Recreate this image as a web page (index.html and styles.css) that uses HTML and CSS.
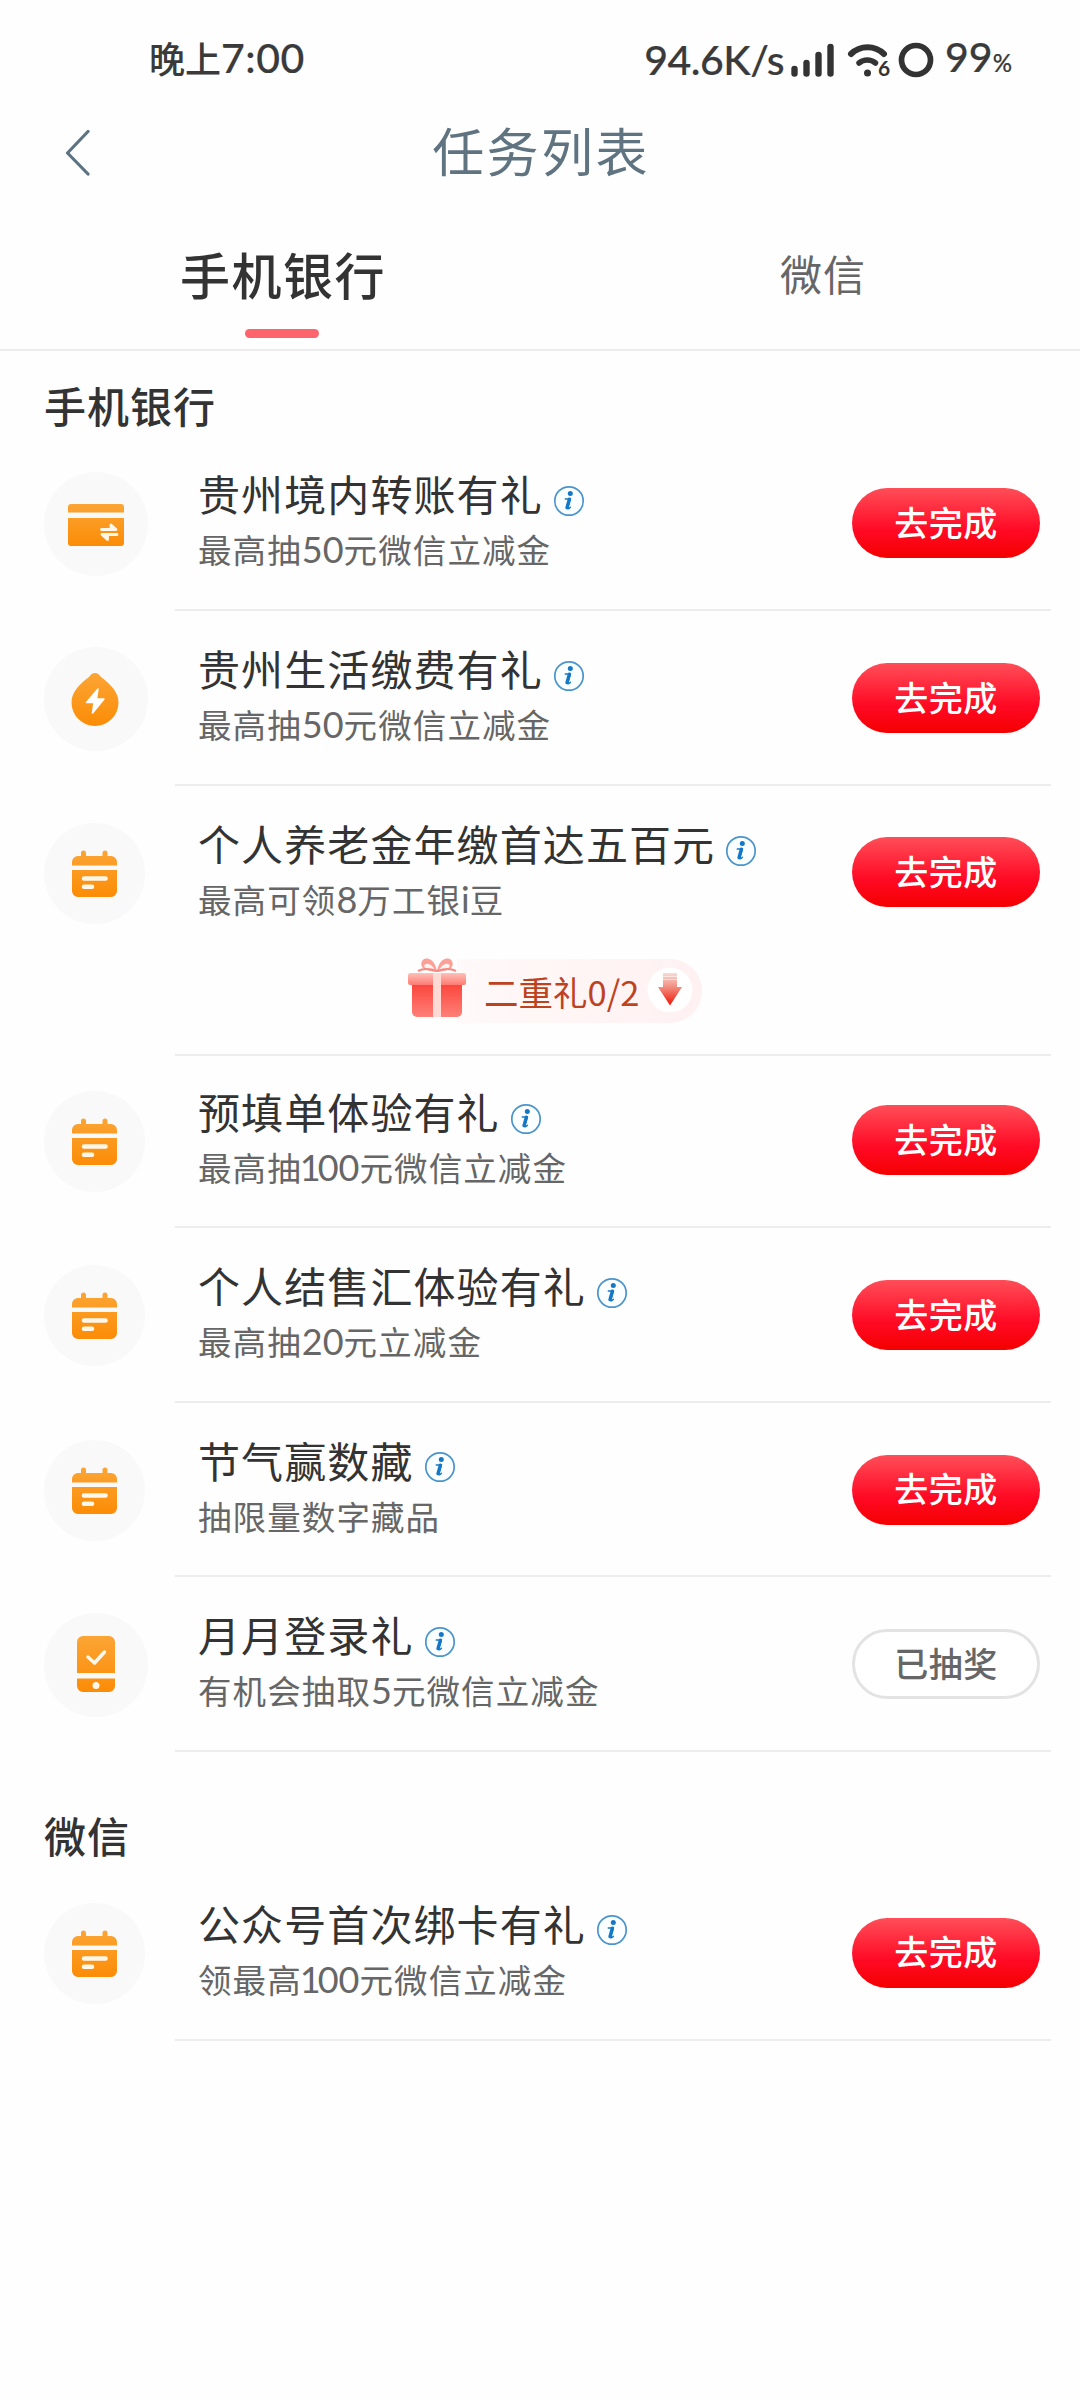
FILE: index.html
```html
<!DOCTYPE html>
<html lang="zh-CN">
<head>
<meta charset="utf-8">
<title>任务列表</title>
<link rel="stylesheet" href="styles.css">
</head>
<body>
<svg class="defs" width="0" height="0" aria-hidden="true">
  <defs>
    <linearGradient id="orange" x1="0" y1="0" x2="0" y2="1"><stop offset="0" stop-color="#fba535"/><stop offset="1" stop-color="#fb8c06"/></linearGradient>
    <linearGradient id="box" x1="0" y1="0" x2="0" y2="1"><stop offset="0" stop-color="#fb4238"/><stop offset="1" stop-color="#fd8078"/></linearGradient>
    <linearGradient id="lid" x1="0" y1="0" x2="0" y2="1"><stop offset="0" stop-color="#ffc0b8"/><stop offset="1" stop-color="#fd7a72"/></linearGradient>
    <linearGradient id="arrow" x1="0" y1="0" x2="0" y2="1"><stop offset="0" stop-color="#f8dcd8"/><stop offset=".45" stop-color="#f28a7c"/><stop offset="1" stop-color="#f01404"/></linearGradient>
    <symbol id="i-card" viewBox="0 0 104 104">
      <path d="M27 32h50a3 3 0 0 1 3 3v5.500H24V35a3 3 0 0 1 3-3zM24 46h56v25a3 3 0 0 1-3 3H27a3 3 0 0 1-3-3z" fill="url(#orange)"/>
      <path d="M57.500 57.500H72L67 53v4M73 62.500H58l5.500 5v-4" fill="none" stroke="#fff8ea" stroke-width="2.800" stroke-linejoin="round" stroke-linecap="round"/>
    </symbol>
    <symbol id="i-drop" viewBox="0 0 104 104">
      <path d="M51 26c2.500 0 4 1.500 6 4 10 7.500 17.500 15.500 17.500 25.500a23.500 23.500 0 0 1-47 0C27.500 45.500 35 37.500 45 30c2-2.500 3.500-4 6-4z" fill="url(#orange)"/>
      <path d="M54 42 42.500 55.500H50L48.500 66 60 52h-7.500z" fill="#fff" stroke="#fff" stroke-width="1.500" stroke-linejoin="round"/>
    </symbol>
    <symbol id="i-cal" viewBox="0 0 101 101">
      <path d="M37 30a2.500 2.500 0 0 1 5 0v3h16.500v-3a2.500 2.500 0 0 1 5 0v3H67a6 6 0 0 1 6 6v3.500H28V39a6 6 0 0 1 6-6h3zM28 47h45v21a6 6 0 0 1-6 6H34a6 6 0 0 1-6-6z" fill="url(#orange)"/>
      <path d="M40 55.500h21.500M40 63.700h8" stroke="#fff8ea" stroke-width="4.600" stroke-linecap="round"/>
    </symbol>
    <symbol id="i-phone" viewBox="0 0 104 104">
      <path d="M39 23h26a6 6 0 0 1 6 6v31H33V29a6 6 0 0 1 6-6zM33 65.500h38V73a6 6 0 0 1-6 6H39a6 6 0 0 1-6-6z" fill="url(#orange)"/>
      <path d="m44 44 6.500 6 10-11" fill="none" stroke="#fff8ea" stroke-width="3.500" stroke-linecap="round" stroke-linejoin="round"/>
      <circle cx="52" cy="72.500" r="3.500" fill="#fff8ea"/>
    </symbol>
    <symbol id="i-info" viewBox="0 0 32 32">
      <circle cx="16" cy="16" r="14.200" fill="#fbfeff" stroke="#4a94cc" stroke-width="1.700"/>
      <circle cx="17.300" cy="8.600" r="2.500" fill="#1478c8"/>
      <path d="M12.300 14h5l-2.500 9c-.2 1 .7 1.200 2.600-.7" fill="none" stroke="#1478c8" stroke-width="1.500" stroke-linecap="round"/>
      <path d="M16.400 14.200 14 22.600" stroke="#1478c8" stroke-width="3.400" stroke-linecap="round"/>
    </symbol>
  </defs>
</svg>

<header class="status">
  <div class="clock"><span class="cn">晚上</span>7:00</div>
  <div class="indicators">
    <span class="speed">94.6K/s</span>
    <svg class="signal" width="44" height="34" viewBox="0 0 44 34"><path d="M3.500 26v4.500M15.500 20v10.500M27.500 12v18.500M39.500 4v26.500" stroke="#333" stroke-width="6.400" stroke-linecap="round"/></svg>
    <svg class="wifi" width="46" height="48" viewBox="0 -6 46 48"><path d="M4 12a23.500 23.500 0 0 1 33 0" fill="none" stroke="#333" stroke-width="6" stroke-linecap="round"/><path d="M12 21a13 13 0 0 1 16.500 0" fill="none" stroke="#333" stroke-width="5.500" stroke-linecap="round"/><circle cx="20.500" cy="31" r="3.500" fill="#333"/><text x="31" y="34" class="wifi-gen">6</text></svg>
    <svg class="ring" width="36" height="36" viewBox="0 0 36 36"><circle cx="18" cy="18" r="14.500" fill="none" stroke="#333" stroke-width="5.700"/></svg>
    <span class="level">99<small>%</small></span>
  </div>
</header>

<nav class="navbar">
  <svg class="back" width="26" height="48" viewBox="0 0 26 48"><path d="M23 3.500 2.500 25 23 46" fill="none" stroke="#5d7382" stroke-width="3.200" stroke-linecap="round" stroke-linejoin="round"/></svg>
  <h1>任务列表</h1>
</nav>

<div class="tabs">
  <div class="tab active">手机银行</div>
  <div class="tab">微信</div>
</div>

<main>
  <section>
    <h2>手机银行</h2>
    <article class="task first">
      <svg class="icon"><use href="#i-card"/></svg>
      <div class="body"><div class="text"><h3>贵州境内转账有礼<svg class="info"><use href="#i-info"/></svg></h3><p>最高抽<b>50</b>元微信立减金</p></div><button>去完成</button></div>
    </article>
    <article class="task first">
      <svg class="icon"><use href="#i-drop"/></svg>
      <div class="body"><div class="text"><h3>贵州生活缴费有礼<svg class="info"><use href="#i-info"/></svg></h3><p>最高抽<b>50</b>元微信立减金</p></div><button>去完成</button></div>
    </article>
    <article class="task bonus">
      <svg class="icon small"><use href="#i-cal"/></svg>
      <div class="body"><div class="text"><h3>个人养老金年缴首达五百元<svg class="info"><use href="#i-info"/></svg></h3><p>最高可领<b>8</b>万工银<b>i</b>豆</p></div><button>去完成</button></div>
      <div class="reward">
        <svg class="gift" width="60" height="62" viewBox="0 0 60 62">
          <path d="M30 15C29 6 24 1 19 1.500S13 8 16 11s8 3 14 4zM30 15C31 6 36 1 41 1.500S47 8 44 11s-8 3-14 4z" fill="#fb9f97"/>
          <path d="M28 13c-3-5-6-7-9-6s-2 4 2 5zM32 13c3-5 6-7 9-6s2 4-2 5z" fill="#fff3f0"/>
          <path d="M11 14c6-3 13-2 19 0 6-2 13-3 19 0" fill="none" stroke="#f98880" stroke-width="2"/>
          <path d="M5 25h50v30a5 5 0 0 1-5 5H10a5 5 0 0 1-5-5z" fill="url(#box)"/>
          <rect x="1" y="16" width="58" height="12" rx="2.500" fill="url(#lid)"/>
          <path d="M26 16h8v44h-8z" fill="#ffd9d3"/>
        </svg>
        <span>二重礼0/2</span>
        <svg class="more" width="46" height="46" viewBox="0 0 46 46"><circle cx="23" cy="23" r="22.500" fill="#fff"/><path d="M16 6h14v3H16zM16 9.500h14v3H16zM16 13h14v7h5L23 38.500 11 20h5z" fill="url(#arrow)"/></svg>
      </div>
    </article>
    <article class="task after-bonus">
      <svg class="icon small"><use href="#i-cal"/></svg>
      <div class="body"><div class="text"><h3>预填单体验有礼<svg class="info"><use href="#i-info"/></svg></h3><p>最高抽<b><i>1</i>00</b>元微信立减金</p></div><button>去完成</button></div>
    </article>
    <article class="task">
      <svg class="icon small"><use href="#i-cal"/></svg>
      <div class="body"><div class="text"><h3>个人结售汇体验有礼<svg class="info"><use href="#i-info"/></svg></h3><p>最高抽<b>20</b>元立减金</p></div><button>去完成</button></div>
    </article>
    <article class="task">
      <svg class="icon small"><use href="#i-cal"/></svg>
      <div class="body"><div class="text"><h3>节气赢数藏<svg class="info"><use href="#i-info"/></svg></h3><p>抽限量数字藏品</p></div><button>去完成</button></div>
    </article>
    <article class="task">
      <svg class="icon"><use href="#i-phone"/></svg>
      <div class="body"><div class="text"><h3>月月登录礼<svg class="info"><use href="#i-info"/></svg></h3><p>有机会抽取<b>5</b>元微信立减金</p></div><button class="done">已抽奖</button></div>
    </article>
  </section>
  <section class="wechat">
    <h2>微信</h2>
    <article class="task first">
      <svg class="icon small"><use href="#i-cal"/></svg>
      <div class="body"><div class="text"><h3>公众号首次绑卡有礼<svg class="info"><use href="#i-info"/></svg></h3><p>领最高<b><i>1</i>00</b>元微信立减金</p></div><button>去完成</button></div>
    </article>
  </section>
</main>
</body>
</html>
```

FILE: styles.css
```css
* { box-sizing: border-box; }
body {
  margin: 0;
  width: 1080px;
  min-height: 2400px;
  background: #fefefe;
  color: #333;
  font-family: "Noto Sans CJK SC", sans-serif;
}
h1, h2, h3, p { margin: 0; font-weight: 400; }
.defs { display: block; height: 0; }

.status {
  height: 120px;
  padding: 0 68px 0 149px;
  display: flex;
  justify-content: space-between;
  align-items: center;
  font: 500 41px/60px Lato, "Noto Sans CJK SC", sans-serif;
  color: #3a3a3a;
  -webkit-text-stroke: .2px #3a3a3a;
}
.clock { letter-spacing: .5px; padding-bottom: 5px; }
.clock .cn { font: 500 36px/60px "Noto Sans CJK SC", sans-serif; letter-spacing: 0; -webkit-text-stroke: 0; }
.indicators { display: flex; align-items: center; }
.indicators span { line-height: 56px; }
.speed { padding-bottom: 1px; letter-spacing: -.5px; }
.signal { margin-left: 7px; }
.wifi { margin-left: 12px; }
.ring { margin-left: 5px; }
.level { margin-left: 11px; }
.level small { font-size: 24px; }
.wifi-gen { font: 700 21px Lato, sans-serif; fill: #333; }

.navbar {
  height: 64px;
  display: flex;
  align-items: center;
  padding: 0 65px;
}
.back { margin-right: -26px; }
.navbar h1 {
  flex: 1;
  margin-top: -5px;
  text-align: center;
  font-size: 52px;
  line-height: 64px;
  letter-spacing: 2.400px;
  text-indent: 2px;
  color: #5f7380;
}

.tabs {
  height: 167px;
  display: grid;
  grid-template-columns: 563px 517px;
  border-bottom: 2px solid #ececec;
}
.tab {
  padding-top: 57px;
  font-size: 42px;
  line-height: 64px;
  letter-spacing: 1px;
  text-indent: 3px;
  text-align: center;
  color: #666;
}
.tab.active { font-size: 50px; font-weight: 500; letter-spacing: 1.500px; color: #333; }
.tab.active::after {
  content: "";
  display: block;
  width: 74px;
  height: 9px;
  margin: 24px auto 0;
  border-radius: 5px;
  background: #fd646b;
}

h2 {
  height: 85px;
  padding: 23px 0 0 44px;
  font-size: 42px;
  font-weight: 500;
  line-height: 62px;
  letter-spacing: 1px;
}
.task {
  height: 174.500px;
  display: grid;
  grid-template-columns: 131px 876px;
  grid-template-rows: 100%;
  margin-left: 44px;
}
.task.first { height: 175px; }
.icon { width: 104px; height: 104px; margin-top: 36px; border-radius: 50%; background: #f9f9f9; }
.icon.small { width: 101px; height: 101px; margin-top: 37px; }
.body {
  display: flex;
  justify-content: space-between;
  padding: 0 11px 0 23px;
  border-bottom: 2px solid #ededed;
}
.text { padding-top: 25px; }
h3 {
  display: flex;
  align-items: center;
  height: 64px;
  font-size: 42px;
  line-height: 62px;
  letter-spacing: 1.100px;
  white-space: nowrap;
}
.info { width: 32px; height: 32px; margin: 15px 0 0 10px; }
p {
  height: 48px;
  font-size: 33.500px;
  line-height: 48px;
  letter-spacing: 1.100px;
  color: #666;
}
p b { font: 400 36px/48px Lato, sans-serif; letter-spacing: 0; }
p i { font-style: normal; letter-spacing: -3px; margin-left: -2px; }
button {
  width: 188px;
  height: 70px;
  margin-top: 52px;
  padding: 0 0 3px;
  border: 0;
  border-radius: 35px;
  background: linear-gradient(#ff4e58, #ff0a25 60%, #f40000);
  color: #fff;
  font: 500 34px/64px "Noto Sans CJK SC", sans-serif;
  letter-spacing: .5px;
}
button.done { background: #fff; border: 3px solid #e3e3e3; color: #666; line-height: 58px; }

.bonus { height: 270px; grid-template-rows: 175px 95px; }
.bonus .body { border-bottom: 0; }
.bonus button { margin-top: 51px; }
.reward {
  grid-column: 2;
  display: flex;
  align-items: flex-start;
  height: 95px;
  padding-left: 232px;
  border-bottom: 2px solid #ededed;
}
.gift { margin-top: -4px; z-index: 1; }
.reward span {
  height: 64px;
  margin: -2px -54px 0 -10px;
  padding: 0 63px 0 27px;
  border-radius: 0 32px 32px 0;
  background: linear-gradient(90deg, #fff9f9, #fff1f1);
  font-size: 34.500px;
  line-height: 64px;
  color: #bd431e;
}
.more { margin: 6px 0 0 -1px; }
.after-bonus { height: 172px; }
.after-bonus .icon.small { margin-top: 35px; }
.after-bonus .text { padding-top: 23px; }
.after-bonus button { margin-top: 49px; }
.wechat h2 { height: 114px; padding-top: 52px; }
```
